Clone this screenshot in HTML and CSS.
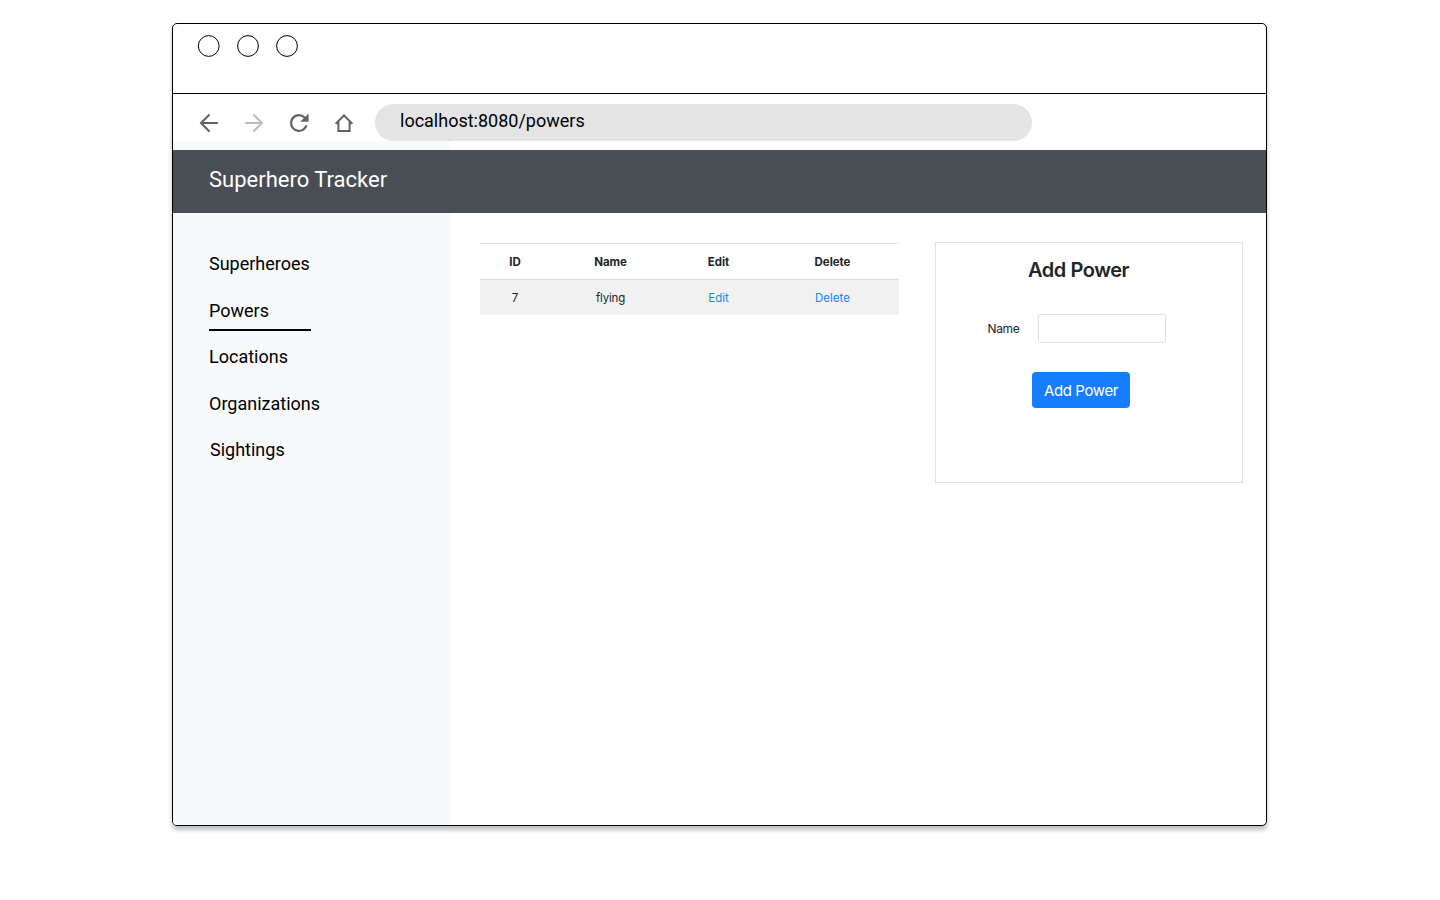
FILE: index.html
```html
<!DOCTYPE html>
<html lang="en">
<head>
<meta charset="utf-8">
<title>Superhero Tracker</title>
<link rel="stylesheet" href="styles.css">
</head>
<body>
<div class="window">
  <div class="titlebar">
    <svg class="dots" width="102" height="24" viewBox="0 0 102 24" fill="none" stroke="#000" stroke-width="1"><circle cx="11.7" cy="12" r="10.4"/><circle cx="51" cy="12" r="10.4"/><circle cx="90" cy="12" r="10.4"/></svg>
  </div>
  <div class="toolbar">
    <div class="controls">
      <svg class="icon icon-line" viewBox="-.44 -.44 24.88 24.88"><path d="M19.200 12H5.200M12 4.900L4.900 12l7.100 7.100"/></svg>
      <svg class="icon icon-line icon-off" viewBox="-.44 -.44 24.88 24.88"><path d="M4.800 12h14M12 4.900l7.100 7.100-7.100 7.100"/></svg>
      <svg class="icon" viewBox="-.44 -.44 24.88 24.88"><path d="M17.650 6.350A7.960 7.960 0 0 0 12 4a8 8 0 1 0 7.730 10h-2.080A6 6 0 1 1 12 6c1.660 0 3.140.690 4.220 1.780L13 11h7.500V3.500z"/></svg>
      <svg class="icon icon-line icon-home" viewBox="-.44 -.44 24.88 24.88"><path d="M4.500 12.800L12 5.300l7.500 7.500M7 10.800v8.400h10v-8.400"/></svg>
    </div>
    <div class="address">localhost:8080/powers</div>
  </div>
  <div class="strip"></div>
  <header class="header">Superhero Tracker</header>
  <div class="page">
    <nav class="sidebar">
      <a class="link">Superheroes</a>
      <a class="link link-active">Powers</a>
      <a class="link">Locations</a>
      <a class="link">Organizations</a>
      <a class="link link-last">Sightings</a>
    </nav>
    <main class="content">
      <table class="powers">
        <colgroup><col class="col-id"><col class="col-name"><col class="col-edit"><col class="col-delete"></colgroup>
        <thead><tr><th>ID</th><th>Name</th><th>Edit</th><th>Delete</th></tr></thead>
        <tbody><tr><td>7</td><td>flying</td><td><a class="action">Edit</a></td><td><a class="action">Delete</a></td></tr></tbody>
      </table>
      <form class="card">
        <h2 class="card-title">Add Power</h2>
        <div class="field"><label class="label" for="name">Name</label><input class="input" id="name" type="text"></div>
        <button class="submit" type="button">Add Power</button>
      </form>
    </main>
  </div>
</div>
</body>
</html>
```
FILE: styles.css
```css
* { box-sizing: border-box; }
body { margin: 0; min-height: 900px; padding: 23px 0 0 172px; background: #fff; font-family: Roboto, sans-serif; color: #000; }
.window { width: 1095px; height: 803px; display: flex; flex-direction: column; border: 1px solid #000; border-radius: 5px; overflow: hidden; background: #fff; box-shadow: 0 4px 4px rgba(0,0,0,.25); }
.titlebar { height: 70px; flex: none; border-bottom: 1px solid #000; padding: 10px 0 0 24px; }
.dots { display: block; }
.toolbar { height: 47px; flex: none; display: flex; align-items: flex-start; padding: 10px 0 0 22px; }
.controls { display: flex; gap: 17px; width: 180px; padding-top: 5px; }
.icon { width: 28px; height: 28px; flex: none; fill: #5f6368; }
.icon-line { fill: none; stroke: #5f6368; stroke-width: 1.8; stroke-linecap: round; }
.icon-home { stroke-linecap: butt; }
.icon-off { stroke: #babcbe; }
.address { width: 657px; height: 37px; border-radius: 19px; background: #e4e4e4; padding-left: 25px; font-size: 18px; line-height: 34px; }
.strip { width: 277px; height: 9px; flex: none; background: #f8f9fb; }
.header { height: 63px; flex: none; background: #494d54; color: #fff; padding-left: 36px; font-size: 22px; line-height: 59px; }
.page { flex: 1; display: flex; }
.sidebar { width: 277px; background: #f8f9fb; padding: 38px 0 0 36px; display: flex; flex-direction: column; align-items: flex-start; }
.link { height: 46.5px; font-size: 18px; line-height: 26px; }
.link-active { height: 34px; width: 102px; margin-bottom: 12.5px; background: linear-gradient(#000, #000) 0 31.5px / 102px 2px no-repeat; }
.link-last { padding-left: 1px; }
.content { flex: 1; display: flex; align-items: flex-start; padding: 29px 0 0 29.5px; font-family: Inter, sans-serif; color: #212529; }
.powers { width: 419px; margin-top: 1px; border-collapse: separate; border-spacing: 0; table-layout: fixed; font-size: 11.5px; text-align: center; }
.col-id { width: 71px; }
.col-name { width: 120px; }
.col-edit { width: 96px; }
.powers th { height: 37px; padding: 0; border-top: 1px solid #e2e5e8; border-bottom: 1px solid #d9dde1; font-weight: 700; letter-spacing: -.05px; }
.powers td { height: 35px; padding: 0; background: #f1f1f1; letter-spacing: -.2px; }
.powers .action { color: #1a82ff; letter-spacing: 0; }
.card { width: 308px; height: 241px; margin-left: 36.5px; border: 1px solid #e1e2e4; }
.card-title { margin: 14px 0 0 92px; font-size: 20px; line-height: 26px; font-weight: 600; letter-spacing: -.45px; }
.field { display: flex; align-items: center; margin-top: 31px; padding-left: 51.5px; }
.label { width: 50.5px; font-size: 12px; letter-spacing: -.35px; }
.input { width: 128px; height: 29px; border: 1px solid #dcdfe4; border-radius: 3px; background: #fff; }
.submit { display: block; width: 98px; height: 36px; margin: 29px 0 0 96px; padding: 0; border: 0; border-radius: 4px; background: #167dff; color: #fff; font: 15px Inter, sans-serif; letter-spacing: -.4px; }
```
